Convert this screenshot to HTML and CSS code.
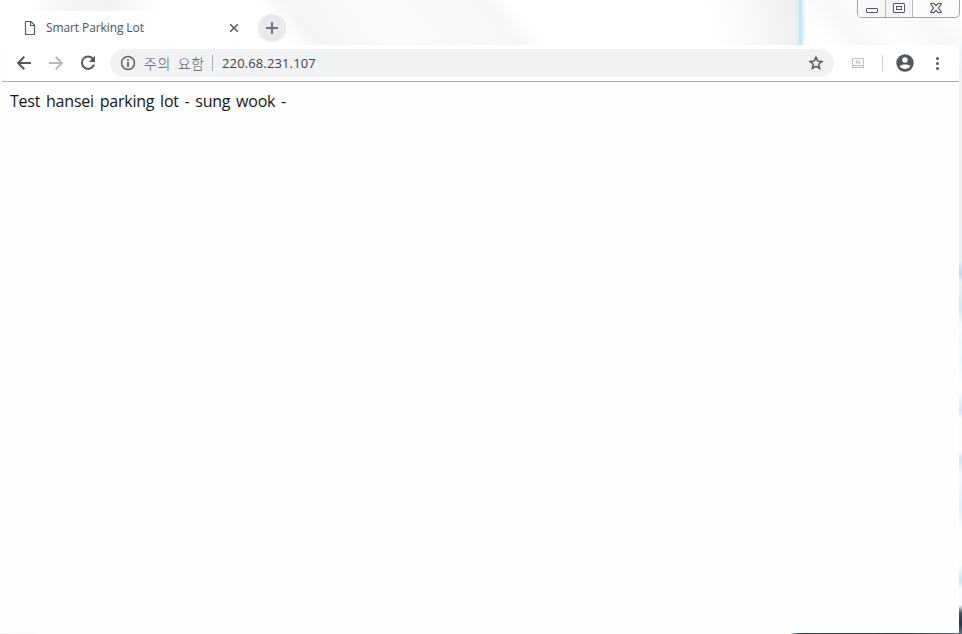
FILE: index.html
```html
<!DOCTYPE html>
<html lang="ko">
<head>
<meta charset="utf-8">
<title>Smart Parking Lot</title>
<link rel="stylesheet" href="styles.css">
</head>
<body>
<div class="window">
  <header class="titlebar">
    <div class="tab">
      <svg class="file-icon" width="12" height="16" viewBox="0 0 12 16"><path d="M1.5 1.5H7L10.5 5V14.500H1.500ZM6.500 1.500V5.500H10.500" fill="none" stroke="#5a5d61" stroke-width="1.2"/></svg>
      <span class="tab-title">Smart Parking Lot</span>
      <svg width="10" height="10" viewBox="0 0 10 10"><path d="M1.200 1.200 8.800 8.800M8.800 1.200 1.200 8.800" stroke="#5a5d61" stroke-width="1.600"/></svg>
    </div>
    <div class="new-tab"><svg width="12" height="12" viewBox="0 0 12 12"><path d="M6 0V12M0 6H12" stroke="#6f7276" stroke-width="1.900"/></svg></div>
    <div class="caption">
      <div class="cap min"><svg width="14" height="14" viewBox="0 0 14 14"><rect x="1.500" y="7.500" width="11" height="4" rx=".5" fill="#fff" stroke="#50536a"/></svg></div>
      <div class="cap max"><svg width="14" height="14" viewBox="0 0 14 14"><rect x="1.500" y="2.500" width="11" height="9" rx=".5" fill="#fff" stroke="#50536a"/><rect x="4.500" y="5.500" width="5" height="3" fill="#fff" stroke="#50536a"/></svg></div>
      <div class="cap close"><svg width="14" height="14" viewBox="0 0 14 14"><path d="M2 2.500H5L7 4.700 9 2.500H12V3.500L9.300 7 12 10.500V11.500H9L7 9.300 5 11.500H2V10.500L4.700 7 2 3.500Z" fill="#fff" stroke="#50536a" stroke-width="1.200"/></svg></div>
    </div>
  </header>
  <nav class="toolbar">
    <svg class="nav" width="16" height="16" viewBox="0 0 16 16"><path d="M15 8H2.500M8.300 1.800 2.100 8 8.300 14.200" fill="none" stroke="#54575b" stroke-width="2"/></svg>
    <svg class="nav" width="16" height="16" viewBox="0 0 16 16"><path d="M1 8H13.500M7.700 1.800 13.900 8 7.700 14.200" fill="none" stroke="#b8babc" stroke-width="2"/></svg>
    <svg class="nav" width="16" height="16" viewBox="0 0 16 16"><path d="M13.300 4.300A6.200 6.200 0 1 0 14 9.500" fill="none" stroke="#54575b" stroke-width="2"/><path d="M15 .8V7H8.800Z" fill="#54575b"/></svg>
    <div class="omnibox">
      <svg width="16" height="16" viewBox="0 0 16 16"><circle cx="8" cy="8" r="6.500" fill="none" stroke="#5f6368" stroke-width="1.500"/><path d="M8 4V5.800M8 7V12" stroke="#5f6368" stroke-width="1.800"/></svg>
      <span class="warning">주의 요함</span>
      <span class="rule"></span>
      <span class="url">220.68.231.107</span>
      <svg class="star" width="16" height="16" viewBox="0 0 16 16"><path d="M8 2.200 9.700 6.100 13.900 6.500 10.700 9.300 11.700 13.500 8 11.300 4.300 13.500 5.300 9.300 2.100 6.500 6.300 6.100Z" fill="none" stroke="#54575b" stroke-width="1.500"/></svg>
    </div>
    <svg class="extension" width="14" height="12" viewBox="0 0 14 12"><path d="M1.500 1.500H12.500V8.500H1.500ZM1 10.500H13M1.500 8V10.500M12.500 8V10.500" fill="none" stroke="#bfc0c2"/><path d="M5 4H9M5 6H9M5.500 4V6M8.500 4V6" stroke="#c4c5c7"/></svg>
    <span class="rule tool-rule"></span>
    <svg class="avatar" width="18" height="18" viewBox="0 0 18 18"><circle cx="9" cy="9" r="8.700" fill="#54575b"/><circle cx="9" cy="6" r="2.700" fill="#fff"/><path d="M3.700 12.300C4.500 9.900 13.500 9.900 14.300 12.300 12 15.800 6 15.800 3.700 12.300Z" fill="#fff"/></svg>
    <svg class="dots" width="4" height="14" viewBox="0 0 4 14"><g fill="#54575b"><circle cx="2.500" cy="2.500" r="1.500"/><circle cx="2.500" cy="7.500" r="1.500"/><circle cx="2.500" cy="12.500" r="1.500"/></g></svg>
  </nav>
  <main class="page">Test hansei parking lot - sung wook -</main>
  <div class="edge-right"></div>
  <div class="edge-bottom"></div>
</div>
</body>
</html>
```
FILE: styles.css
```css
* { box-sizing: border-box; }
body { margin: 0; background: #fff; font-family: "Open Sans", "Noto Sans CJK KR", sans-serif; }
svg { display: block; flex: none; }
.window { position: relative; width: 962px; height: 634px; overflow: hidden; display: flex; flex-direction: column; background: #fefefe; }
.titlebar {
  height: 45px; display: flex; align-items: flex-start; padding: 0 2px 0 8px;
  background:
    linear-gradient(90deg, transparent 795px, #d9eff8 798px, #bde2f2 800px, #d5edf7 802px, transparent 806px),
    linear-gradient(50deg, #fff 10%, #f6f7f7 30%, #fdfdfd 50%, #f5f6f6 75%, #fff 95%) 805px 0 / 157px 45px no-repeat,
    linear-gradient(75deg, #fff 0, #fff 15%, #efefef 95%) 700px 0 / 98px 45px no-repeat,
    linear-gradient(50deg, #fff 14%, #f4f4f4 22%, #fafafa 45%, #f6f6f6 82%, #fff 90%) 245px 0 / 300px 45px no-repeat,
    linear-gradient(90deg, #fff 30px, #f5f5f5 60px, #f2f2f2 110px, #fff 160px) 0 0 / 245px 11px no-repeat,
    #fff;
}
.tab { width: 242px; height: 34px; margin-top: 11px; padding: 0 11px 0 16px; display: flex; align-items: center; background: #fff; border-radius: 8px 8px 0 0; }
.tab-title { flex: 1; margin-left: 10px; font-size: 12px; line-height: 16px; color: #505357; white-space: nowrap; letter-spacing: -.1px; }
.new-tab { width: 28px; height: 28px; margin: 14px 0 0 8px; border-radius: 50%; background: #e9eaed; display: flex; align-items: center; justify-content: center; }
.caption { width: 103px; height: 18px; margin-left: auto; display: flex; border: 1px solid #a2a5a8; border-top: 0; border-radius: 0 0 5px 5px; background: #fbfbfb; overflow: hidden; }
.cap { display: flex; align-items: center; justify-content: center; }
.cap svg { margin-top: -1px; }
.min { width: 27px; background: #f8f8f8; }
.max { width: 28px; border: solid #b5b7b9; border-width: 0 1px; background: #f3f4f5; }
.close { flex: 1; }
.toolbar { height: 37px; margin: 0 3px 0 2px; padding-left: 14px; display: flex; align-items: center; border-bottom: 1px solid #a8aaab; background: #fff; }
.nav { margin-right: 16px; }
.omnibox { width: 724px; height: 28px; margin-left: -2px; border-radius: 14px; background: #f0f2f4; display: flex; align-items: center; padding: 0 10px; }
.warning { width: 62px; margin-left: 8px; font-size: 14px; line-height: 18px; color: #55585c; white-space: nowrap; font-family: "Noto Sans CJK KR", sans-serif; font-weight: 300; letter-spacing: .7px; word-spacing: 2px; }
.rule { width: 1px; height: 16px; margin-left: 6px; background: #a9acaf; }
.url { margin-left: 9px; font-size: 13px; line-height: 18px; color: #404347; letter-spacing: .13px; }
.star { margin-left: auto; }
.extension { margin-left: 17px; }
.tool-rule { margin-left: 17px; background: #d0d2d4; }
.avatar { margin-left: 13px; }
.dots { margin-left: 21px; }
.page { flex: 1; margin: 0 3px 0 2px; padding: 8px; font-size: 16px; line-height: 22px; color: #151515; background: #fefefe; letter-spacing: -.22px; word-spacing: 1.85px; }
.edge-right {
  position: absolute; right: 0; top: 45px; bottom: 0; width: 3px;
  background: linear-gradient(#e9fafe 0, #f1f1f1 30px, #f0f0f0 180px, #e7f2f7 215px, #bcd8ef 229px, #eaf1f3 237px, #ccecf5 264px, #f5fcfe 280px, #e6fcff 315px, #fff 345px, #d2e6f8 365px, #fafcfe 374px, #fafcfe 405px, #d3e5f6 415px, #effaff 428px, #e1f4fc 465px, #fafeff 485px, #fafeff 520px, #c8e9f4 535px, #f7fcfd 545px, #f7fafb 560px, #42505f 568px, #27374a 579px, #607082 589px);
}
.edge-bottom { position: absolute; left: 0; right: 0; bottom: 0; height: 1px; background: linear-gradient(90deg, #f4f4f4 0, #fefefe 60px, #fefefe 790px, #34424b 798px, #2d3b41 900px, #65717b 962px); }
```
